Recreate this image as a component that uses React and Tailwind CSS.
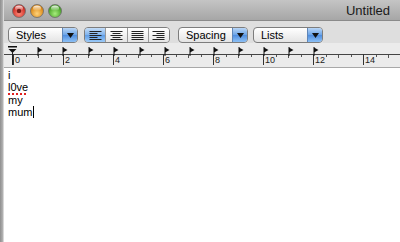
import React from "react";

const font = { fontFamily: '"Liberation Sans", Arial, sans-serif' };

function Light({ c1, c2, dot }) {
  const id = c1.replace("#", "g");
  return (
    <svg width="14" height="14" viewBox="0 0 14 14">
      <defs>
        <radialGradient id={id} cx="50%" cy="70%" r="60%">
          <stop offset="0%" stopColor={c1} />
          <stop offset="100%" stopColor={c2} />
        </radialGradient>
        <linearGradient id={id + "h"} x1="0" y1="0" x2="0" y2="1">
          <stop offset="0%" stopColor="#fff" stopOpacity="0.9" />
          <stop offset="100%" stopColor="#fff" stopOpacity="0" />
        </linearGradient>
      </defs>
      <circle cx="7" cy="7" r="6.5" fill={`url(#${id})`} stroke="#6b6b6b" strokeWidth="0.8" />
      <ellipse cx="7" cy="4.2" rx="4" ry="2.6" fill={`url(#${id}h)`} />
      {dot && <circle cx="7" cy="7" r="2.2" fill="#5a0d08" opacity="0.8" />}
    </svg>
  );
}

function Popup({ label, w }) {
  return (
    <div
      className="flex h-[16px] items-stretch overflow-hidden rounded-[4px] border border-[#7d7d7d] bg-[linear-gradient(#ffffff,#e4e4e4)] shadow-[0_1px_0_rgba(255,255,255,0.6)]"
      style={{ width: w }}
    >
      <div className="flex flex-1 items-center pl-[7px] text-[11px] text-black">{label}</div>
      <div className="flex w-[15px] items-center justify-center border-l border-[#5f86b8] bg-[linear-gradient(#b9d6f7,#6aa3e6_50%,#4e8de0_51%,#8cc0f5)]">
        <svg width="7" height="5" viewBox="0 0 7 5">
          <polygon points="0,0 7,0 3.5,5" fill="#111" />
        </svg>
      </div>
    </div>
  );
}

function AlignIcon({ type }) {
  const rows = [0, 2, 4, 6, 8];
  const widths = {
    left: [12, 8, 12, 8, 12],
    center: [12, 8, 12, 8, 12],
    justify: [12, 12, 12, 12, 12],
    right: [12, 8, 12, 8, 12],
  }[type];
  return (
    <svg width="13" height="9" viewBox="0 0 13 9">
      {rows.map((y, i) => {
        const w = widths[i];
        let x = 0.5;
        if (type === "center") x = 0.5 + (12 - w) / 2;
        if (type === "right") x = 0.5 + (12 - w);
        return <rect key={i} x={x} y={y} width={w} height="1" fill="#222" />;
      })}
    </svg>
  );
}

function Segmented() {
  const items = ["left", "center", "justify", "right"];
  return (
    <div className="flex h-[16px] w-[86px] overflow-hidden rounded-[4px] border border-[#7d7d7d]">
      {items.map((t, i) => (
        <div
          key={t}
          className={
            "flex flex-1 items-center justify-center " +
            (i > 0 ? "border-l border-[#9a9a9a] " : "") +
            (i === 0
              ? "bg-[linear-gradient(#c4ddf8,#7fb2ec_50%,#5f9de6_51%,#9ccaf7)]"
              : "bg-[linear-gradient(#ffffff,#e4e4e4)]")
          }
        >
          <AlignIcon type={t} />
        </div>
      ))}
    </div>
  );
}

function Ruler() {
  const marks = [];
  for (let k = 0; k < 32; k++) {
    const x = 9 + 12.5 * k;
    const xr = Math.round(x);
    if (k % 4 === 0) {
      marks.push(
        <div key={"m" + k} className="absolute top-[11px] h-[11px] w-px bg-[#333]" style={{ left: xr }} />
      );
      marks.push(
        <div
          key={"l" + k}
          className="absolute top-[13px] text-[9px] leading-[9px] text-[#222]"
          style={{ left: xr + 2 }}
        >
          {k / 2}
        </div>
      );
    } else if (k % 2 === 1) {
      marks.push(
        <div key={"s" + k} className="absolute top-[12px] h-[2px] w-px bg-[#555]" style={{ left: xr }} />
      );
    } else {
      marks.push(
        <div key={"s" + k} className="absolute top-[12px] h-[3px] w-px bg-[#555]" style={{ left: xr }} />
      );
    }
  }
  const tabs = [34, 59, 85, 110, 136, 161, 186, 210, 235, 260, 285, 310];
  return (
    <div className="relative h-[24px] bg-[#ebebeb]">
      <div className="absolute left-0 right-0 top-[11px] h-px bg-[#444]" />
      {marks}
      {tabs.map((x) => (
        <svg key={x} className="absolute top-[4px]" style={{ left: x - 1 }} width="6" height="9" viewBox="0 0 6 9">
          <rect x="0.5" y="0" width="1" height="9" fill="#111" />
          <polygon points="1,0.5 5.5,3 1,5.5" fill="#111" />
        </svg>
      ))}
      <svg className="absolute left-[4px] top-[2px]" width="9" height="20" viewBox="0 0 9 20">
        <rect x="0" y="1" width="9" height="1.5" fill="#111" />
        <polygon points="0.5,4 8.5,4 4.5,8" fill="#111" />
        <rect x="4" y="7" width="1" height="13" fill="#222" />
      </svg>
    </div>
  );
}

export default function App() {
  return (
    <div className="flex h-[242px] w-[400px] overflow-hidden bg-white" style={font}>
      <div className="w-[3px] shrink-0 bg-[linear-gradient(90deg,#8e8e8e,#b5b5b5)]" />
      <div className="w-px shrink-0 bg-[#d8d8d8]" />
      <div className="flex min-w-0 flex-1 flex-col">
        <div className="flex h-[21px] shrink-0 items-center border-b border-[#8a8a8a] bg-[linear-gradient(#c4c4c4,#a6a6a6)] pl-[8px] pr-[10px]">
          <div className="flex items-center gap-[4px] pt-[2px]">
            <Light c1="#ff8a7a" c2="#c8221a" dot />
            <Light c1="#ffd27a" c2="#d7800a" />
            <Light c1="#a6ec7c" c2="#3c9a1c" />
          </div>
          <div className="ml-auto pt-[1px] text-[13px] text-[#1a1a1a]">Untitled</div>
        </div>
        <div className="flex h-[22px] shrink-0 items-end bg-[#dedede] pl-[4px]">
          <div className="flex items-center">
            <Popup label="Styles" w={70} />
            <div className="ml-[6px]">
              <Segmented />
            </div>
            <div className="ml-[8px]">
              <Popup label="Spacing" w={70} />
            </div>
            <div className="ml-[5px]">
              <Popup label="Lists" w={70} />
            </div>
          </div>
        </div>
        <Ruler />
        <div className="h-px shrink-0 bg-[#a8a8a8]" />
        <div className="flex-1 bg-white pl-[4px] pt-[1px] text-[11px] leading-[12.4px] text-black">
          <div>i</div>
          <div>
            <span className="underline decoration-dotted decoration-[#e02020] decoration-2 underline-offset-[2px]">l0ve</span>
          </div>
          <div>my</div>
          <div className="flex items-center">
            mum<span className="ml-px inline-block h-[12px] w-px bg-black" />
          </div>
        </div>
      </div>
    </div>
  );
}
